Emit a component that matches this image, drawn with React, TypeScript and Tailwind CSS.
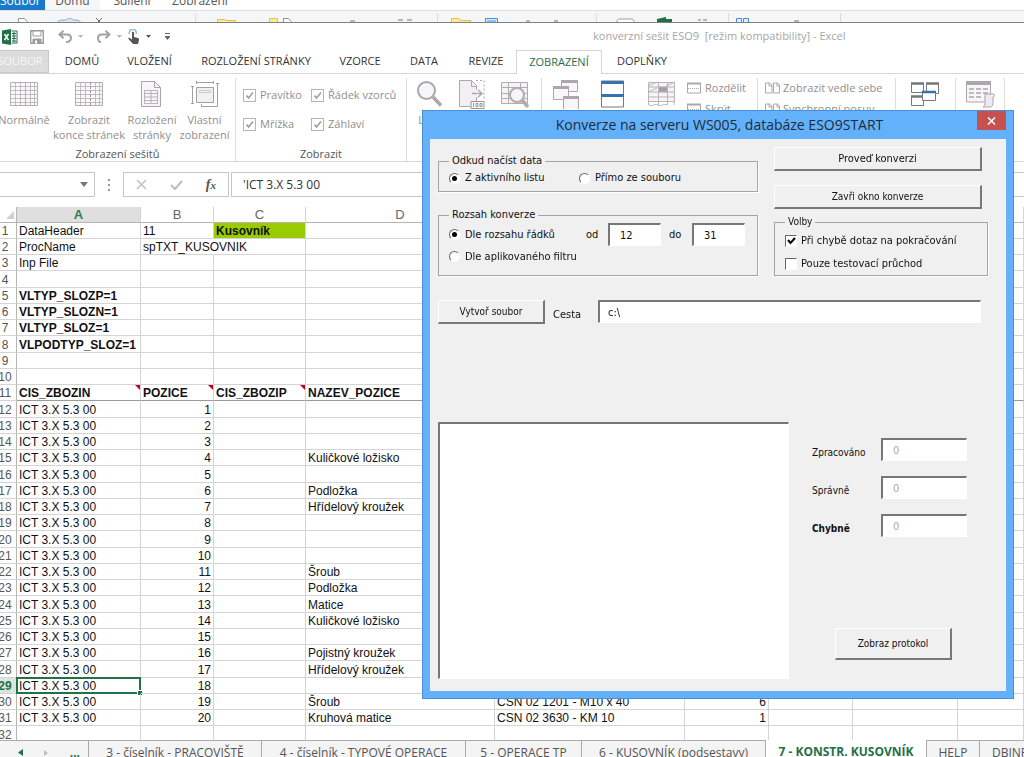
import { useState, type ReactNode } from 'react';

const UI = "font-['Open_Sans','Noto_Sans',sans-serif]";
const SANS = "font-['Liberation_Sans',Arial,sans-serif]";
const TAHOMA = "font-['DejaVu_Sans_Condensed','DejaVu_Sans',sans-serif]";

const tabs = [
  { label: 'DOMŮ', width: 'w-[66px]' },
  { label: 'VLOŽENÍ', width: 'w-[69px]' },
  { label: 'ROZLOŽENÍ STRÁNKY', width: 'w-[144px]' },
  { label: 'VZORCE', width: 'w-[64px]' },
  { label: 'DATA', width: 'w-[64px]' },
  { label: 'REVIZE', width: 'w-[60px]' },
  { label: 'ZOBRAZENÍ', width: 'w-[86px]' },
  { label: 'DOPLŇKY', width: 'w-[80px]' },
];

const names: Record<number, string> = {
  4: 'Kuličkové ložisko',
  6: 'Podložka',
  7: 'Hřídelový kroužek',
  11: 'Šroub',
  12: 'Podložka',
  13: 'Matice',
  14: 'Kuličkové ložisko',
  16: 'Pojistný kroužek',
  17: 'Hřídelový kroužek',
  19: 'Šroub',
  20: 'Kruhová matice',
};

const head: string[][] = [
  ['DataHeader', '11', 'Kusovník'],
  ['ProcName', 'spTXT_KUSOVNIK'],
  ['Inp File'],
  [],
  ['VLTYP_SLOZP=1'],
  ['VLTYP_SLOZN=1'],
  ['VLTYP_SLOZ=1'],
  ['VLPODTYP_SLOZ=1'],
  [],
  [],
  ['CIS_ZBOZIN', 'POZICE', 'CIS_ZBOZIP', 'NAZEV_POZICE'],
];

const items = Array.from({ length: 20 }, (_, i) => {
  const n = i + 1;
  const row = ['ICT 3.X 5.3 00', String(n), '', names[n] ?? '', '', ''];
  if (n === 19) {
    row[4] = 'CSN 02 1201 - M10 x 40';
    row[5] = '6';
  }
  if (n === 20) {
    row[4] = 'CSN 02 3630 - KM 10';
    row[5] = '1';
  }
  return row;
});

const rows: string[][] = [...head, ...items, []];

/* ---------- top strip of the window behind ---------- */

function BackWindow() {
  return (
    <div className={`${UI} text-[12px] leading-4 text-[#555]`}>
      <div className="flex h-[11px] items-end overflow-hidden border-b border-[#dfe0e1]">
        <button className="h-full w-[45px] shrink-0 bg-[#1979ca] text-white"><span className="-mt-2 block pr-2">Soubor</span></button>
        <button className="h-full w-[55px] shrink-0 bg-[#f5f6f7]"><span className="-mt-2 block">Domů</span></button>
        <button className="h-full w-[64px] shrink-0"><span className="-mt-2 block">Sdílení</span></button>
        <button className="h-full w-[72px] shrink-0"><span className="-mt-2 block">Zobrazení</span></button>
      </div>
      <div className="h-3 overflow-hidden border-b border-[#808080] bg-[#f5f6f7]">
        <svg width="1024" height="11" fill="none">
          <path d="M195.500 2v9M437.500 2v9M596.500 2v9M728.500 2v9M840.500 2v9" stroke="#dcdddd" />
          <path d="M18.500 11V7.500h6l3 3.500M283.500 11V7.500h5l3 3.500" stroke="#8f9499" fill="#fff" />
          <path d="M58 11c0-2 4-2 8-2 1-2 6-2 7 0 4 0 7 0 7 2" stroke="#8fa8cf" fill="#dce6f4" />
          <path d="M96 7l4 4M102 7l-4 4" stroke="#6c6c6c" />
          <path d="M217.500 11V8.500h7l2 1h9V11M269.500 11V7.500h8V11M451.500 11V7.500h7l3 2h9V11" fill="#fbe9a0" stroke="#e3c14a" />
          <path d="M350 10h5M398 9h5M407 9h5M526 10h4M554 10h4M698 9h3M703 9h4M794 10h5" stroke="#777" />
          <path d="M485.500 11V7.500h12V11M487 10h9M736.500 11V7.500h5V11M743.500 11V7.500h5V11" stroke="#3b8ede" fill="#e2f0fd" />
          <path d="M617 11c0-3 2-3 4-3h10c2 0 3 1 3 3" stroke="#999" fill="#fff" />
          <path d="M657 11V8l9-2v2h6v3z" fill="#1e7145" />
        </svg>
      </div>
    </div>
  );
}

/* ---------- quick access bar ---------- */

function Caret({ dark }: { dark?: boolean }) {
  return (
    <svg width="5" height="3" className={dark ? 'text-[#555]' : 'text-[#b5b5b5]'}>
      <path d="M0 0h5L2.500 3z" fill="currentColor" />
    </svg>
  );
}

function QuickAccess() {
  return (
    <div className={`${UI} flex h-[27px] shrink-0 items-center text-[11px]`}>
      <div className="flex w-[593px] shrink-0 items-center pl-[2px]">
        <svg width="16" height="16" viewBox="0 0 16 16">
          <path d="M0 1.500 9 0v16L0 14.500z" fill="#1e7145" />
          <path d="M9.500 2h5.500v12H9.500" fill="#fff" stroke="#1e7145" />
          <path d="M10 4.500h4M10 7h4M10 9.500h4M10 12h4M12 3v10" stroke="#1e7145" />
          <path d="M2.500 5l4 6M6.500 5l-4 6" stroke="#fff" strokeWidth="1.500" />
        </svg>
        <button aria-label="Uložit" className="ml-3">
          <svg width="14" height="14" viewBox="0 0 14 14" fill="none" stroke="#9c9c9c">
            <path d="M.7.700h12.600v12.600H.7z" strokeWidth="1.400" />
            <path d="M3 1v5h8V1" />
            <path d="M3 13V9h8v4" fill="#9c9c9c" />
            <path d="M5 10.500h2v3H5z" fill="#fff" stroke="none" />
          </svg>
        </button>
        <button aria-label="Zpět" className="ml-[14px] flex items-center gap-[6px]">
          <svg width="14" height="13" viewBox="0 0 14 13" fill="none" stroke="#a3a3a3" strokeWidth="2">
            <path d="M5.500.800 1.500 4.500l4 3.700M2 4.500h7c2.500 0 4 1.500 4 3.500 0 2.500-2 4-5 4" />
          </svg>
          <Caret />
        </button>
        <button aria-label="Znovu" className="ml-[14px] flex items-center gap-[6px]">
          <svg width="14" height="13" viewBox="0 0 14 13" fill="none" stroke="#a3a3a3" strokeWidth="2">
            <path d="M8.500.800l4 3.700-4 3.700M12 4.500H5C2.500 4.500 1 6 1 8c0 2.500 1 4 3 4" />
          </svg>
          <Caret />
        </button>
        <button aria-label="Dotykový režim" className="ml-[6px] flex items-center gap-[6px]">
          <svg width="12" height="15" viewBox="0 0 12 15">
            <path d="M1.500 5a3.500 3.500 0 1 1 6.500 0" fill="none" stroke="#8db8e0" strokeWidth="1.500" />
            <path d="M4 3.500c0-1 2-1 2 0V8l4 1c1 .300 1 1 1 2l-1 4H5L.500 10c-.5-1 .5-1.500 1.200-1L4 10.500z" fill="#555" />
          </svg>
          <Caret dark />
        </button>
        <button aria-label="Přizpůsobit" className="ml-[13px]">
          <svg width="7" height="8"><path d="M1 .500h5" stroke="#666" /><path d="M1 3h5v1L3.500 7 1 4z" fill="#666" /></svg>
        </button>
      </div>
      <h1 className="whitespace-pre text-[#a6a6a6]">konverzní sešit ESO9  [režim kompatibility] - Excel</h1>
    </div>
  );
}

/* ---------- ribbon ---------- */

function RibbonTabs() {
  return (
    <nav className={`${UI} flex h-6 shrink-0 border-b border-[#d5d5d5] text-[11px] text-[#333]`}>
      <button className="flex w-[49px] shrink-0 items-center justify-center border border-l-0 border-[#c6c6c6] bg-[#dcdcdc] pr-2 text-[#f7f7f7]">SOUBOR</button>
      {tabs.map((t) =>
        t.label === 'ZOBRAZENÍ' ? (
          <button key={t.label} className={`${t.width} -mb-px h-6 shrink-0 border border-b-0 border-[#d5d5d5] bg-white text-[#1e7145]`}>{t.label}</button>
        ) : (
          <button key={t.label} className={`${t.width} shrink-0 whitespace-nowrap`}>{t.label}</button>
        )
      )}
    </nav>
  );
}

function BigButton({ width, icon, label, lines = [] }: { width: string; icon: ReactNode; label?: string; lines?: string[] }) {
  return (
    <button aria-label={label} className={`${width} flex shrink-0 flex-col items-center`}>
      <span className="mb-[2px] flex h-8 items-center">{icon}</span>
      {lines.map((l) => (
        <span key={l} className="whitespace-nowrap leading-[15px]">{l}</span>
      ))}
    </button>
  );
}

function Group({ width, title, children }: { width: string; title?: string; children: ReactNode }) {
  return (
    <div className={`${width} flex h-[84px] shrink-0 flex-col justify-between border-r border-[#dcdcdc]`}>
      <div className="flex">{children}</div>
      {title && <div className="text-center leading-4 text-[#555]">{title}</div>}
    </div>
  );
}

function RibbonCheck({ label }: { label: string }) {
  return (
    <label className="flex items-center gap-1 whitespace-nowrap">
      <span className="relative flex">
        <input type="checkbox" defaultChecked className="size-[13px] appearance-none border border-[#b5b5b5] bg-white" />
        <svg className="pointer-events-none absolute left-0 top-0" width="13" height="13" fill="none" stroke="#9a9a9a" strokeWidth="1.500">
          <path d="M3.500 6.500 5.500 9 10 3.500" />
        </svg>
      </span>
      {label}
    </label>
  );
}

const GridIcon = ({ split }: { split?: boolean }) => (
  <svg width="29" height="26" fill="none" stroke="#b4afb3">
    <path d="M.500 1.500h27v23H.500z" fill="#faf8fa" />
    <path d="M1 5.500h27M1 9.500h27M1 13.500h27M1 17.500h27M1 21.500h27M5.500 1v23M10.500 1v23M20.500 1v23M24.500 1v23" strokeWidth=".8" />
    <path d="M15.500 1v23" strokeDasharray={split ? '3 1' : undefined} stroke={split ? '#9a969a' : '#b4afb3'} />
  </svg>
);

const PageIcon = () => (
  <svg width="22" height="28" fill="none" stroke="#a8a4a8">
    <path d="M.500 1.500h13l6 6v19H.500z" fill="#f7f5f7" />
    <path d="M13.500 1v6.500h6" />
    <path d="M3.500 10.500h13v13h-13zM3.500 13.500h13M3.500 17h13M3.500 20.500h13M10 10.500v13" strokeWidth=".8" />
  </svg>
);

const CustomViewIcon = () => (
  <svg width="28" height="27" fill="none" stroke="#a39fa3">
    <path d="M5.500 6.500h17v15h-17z" fill="#f3f0f4" />
    <path d="M8.500 9.500h11v2h-11z" stroke="#ccc" />
    <path d="M5 1.500h17M5.500 0v3M22.500 0v3M1.500 5v17M0 5.500h3M0 22.500h3M26.500 3v22.500H10M25 2.500h3M10.500 23v3" />
  </svg>
);

const LensIcon = () => (
  <svg width="30" height="28" fill="none" stroke="#aba7ab">
    <circle cx="10.500" cy="10.500" r="8.500" fill="#f6f6f8" strokeWidth="2" />
    <path d="M17 17l8 8.500" strokeWidth="3.500" />
  </svg>
);

const HundredIcon = () => (
  <svg width="26" height="30" fill="none" stroke="#aba7ab">
    <path d="M.500 1.500h12l5 5V22H12v5H.500z" fill="#f3eff5" stroke="none" />
    <path d="M12 27.500H.500v-26h12l5 5V11M17.500 18v4" />
    <path d="M12.500 1.500v6h5" />
    <path d="M17 1.500h8V20" strokeDasharray="2 2" />
    <path d="M13 14.500h9M19 11l4 3.500-4 3.500" strokeWidth="1.500" />
    <path d="M12 22.500h13v7H12z" fill="#fff" stroke="#959195" />
    <path d="M14.500 24v4M17 24.500h2v3h-2zM21 24.500h2v3h-2z" stroke="#959195" />
  </svg>
);

const ZoomSelIcon = () => (
  <svg width="29" height="28" fill="none" stroke="#b0acb0">
    <path d="M.500 2.500h26v21H.500zM1 7.500h26M1 13.500h26M1 18.500h26M7.500 2v21M19.500 2v21" fill="#f5f3f6" />
    <circle cx="16" cy="15" r="7" fill="#f6f6f8" strokeWidth="2" />
    <path d="M21 20l6 7" strokeWidth="3.500" />
  </svg>
);

const NewWindowIcon = () => (
  <svg width="26" height="30" fill="none" stroke="#aba7ab">
    <path d="M8.500 2.500h16v10h-16z" fill="#f8f6f8" />
    <path d="M8 2.500h17" strokeWidth="3" />
    <path d="M.500 8.500h15v12H.500z" fill="#f8f6f8" />
    <path d="M0 8.500h16" strokeWidth="3" />
    <path d="M10.500 18.500h15v12h-15z" fill="#f8f6f8" />
    <path d="M10 18.500h16" strokeWidth="3" />
  </svg>
);

const ArrangeIcon = () => (
  <svg width="24" height="28" fill="none">
    <path d="M.500 1h22v26H.500z" fill="#fff" stroke="#777" />
    <path d="M0 2.500h23M0 15.500h23" stroke="#3572b0" strokeWidth="3" />
  </svg>
);

const FreezeIcon = () => (
  <svg width="28" height="26" fill="none" stroke="#b8b4b8">
    <path d="M.500 1.500h26v19h-26zM.500 6h26M.500 11h26M.500 16h26M10.500 1v23M19.500 1v23M1 24c3 2 6-2 9 0 3 2 6-2 9 0M.500 20v4M26 20v4" fill="#f6f4f6" />
    <path d="M0 5l9-4M0 11l9-4M18 5l9-4" />
    <path d="M10.500 6h9v5h-9z" fill="#a39fa3" />
  </svg>
);

const SplitIcon = () => (
  <svg width="14" height="12" fill="none" stroke="#aba7ab">
    <path d="M.500 1.500h13v9.500H.500z" /><path d="M0 1.500h14" strokeWidth="2" /><path d="M1 6.500h12" strokeDasharray="1 1" />
  </svg>
);

const SideIcon = () => (
  <svg width="15" height="12" fill="none" stroke="#aba7ab">
    <path d="M.500 1h4l2.500 2v8H.500zM8.500 1h4L14.500 3v8h-6zM4 1v3h3M12 1v3h2.500" />
  </svg>
);

const SwitchIcon = () => (
  <svg width="29" height="26" fill="none" stroke="#777">
    <path d="M.500 2.500h12v9H.500zM15.500 2.500h12v10h-12zM.500 15.500h12v9H.500z" fill="#fff" />
    <path d="M0 2.500h13M15 2.500h13M0 15.500h13" strokeWidth="2.500" />
    <path d="M11.500 10.500h13v9h-13z" fill="#fff" /><path d="M11 11h14" stroke="#3572b0" strokeWidth="2.500" />
  </svg>
);

const MacroIcon = () => (
  <svg width="29" height="28" fill="none" stroke="#aba7ab">
    <path d="M.500 2h24v20H.500z" fill="#f8f6f8" /><path d="M0 3h25" strokeWidth="4" />
    <path d="M3 9h5M10 9h5M17 9h5M3 13h5M10 13h5M17 13h5M3 17h5M10 17h5" strokeWidth="1.500" />
    <path d="M19 14h8c2 0 2 3 0 3v7c0 2-2 3-3 3h-7c2-1 2-3 2-5z" fill="#eee9f0" />
  </svg>
);

function Ribbon() {
  return (
    <section className={`${UI} flex h-[88px] shrink-0 items-start overflow-hidden border-b border-[#d5d5d5] pt-1 text-[11px] text-[#8f8f8f]`}>
      <Group width="w-[236px]" title="Zobrazení sešitů">
        <BigButton width="w-[48px]" icon={<GridIcon />} lines={['Normálně']} />
        <BigButton width="w-[82px]" icon={<GridIcon split />} lines={['Zobrazit', 'konce stránek']} />
        <BigButton width="w-[44px]" icon={<PageIcon />} lines={['Rozložení', 'stránky']} />
        <BigButton width="w-[61px]" icon={<CustomViewIcon />} lines={['Vlastní', 'zobrazení']} />
      </Group>
      <Group width="w-[171px]" title="Zobrazit">
        <div className="grid grid-cols-[68px_1fr] gap-y-[11px] pl-[7px] pt-2 leading-[18px]">
          <RibbonCheck label="Pravítko" />
          <RibbonCheck label="Řádek vzorců" />
          <RibbonCheck label="Mřížka" />
          <RibbonCheck label="Záhlaví" />
        </div>
      </Group>
      <Group width="w-[135px]">
        <BigButton width="w-[48px]" icon={<LensIcon />} lines={['Lupa']} />
        <BigButton width="w-[34px]" icon={<HundredIcon />} label="100 %" />
        <BigButton width="w-[53px]" icon={<ZoomSelIcon />} label="Přejít na výběr" />
      </Group>
      <Group width="w-[216px]">
        <BigButton width="w-[48px]" icon={<NewWindowIcon />} label="Nové okno" />
        <BigButton width="w-[46px]" icon={<ArrangeIcon />} label="Uspořádat vše" />
        <BigButton width="w-[51px]" icon={<FreezeIcon />} label="Ukotvit příčky" />
        <div className="flex flex-col gap-[5px] pt-[2px] leading-4">
          <button className="flex items-center gap-1"><SplitIcon />Rozdělit</button>
          <button className="flex items-center gap-1"><SplitIcon />Skrýt</button>
        </div>
      </Group>
      <Group width="w-[138px]">
        <div className="flex flex-col gap-[5px] whitespace-nowrap pl-[7px] pt-[2px] leading-4">
          <button className="flex items-center gap-[3px]"><SideIcon />Zobrazit vedle sebe</button>
          <button className="flex items-center gap-[3px]"><SideIcon />Synchronní posuv</button>
        </div>
      </Group>
      <Group width="w-[60px]">
        <BigButton width="w-[59px]" icon={<SwitchIcon />} label="Přepnout okna" />
      </Group>
      <Group width="w-[49px]">
        <BigButton width="w-[48px]" icon={<MacroIcon />} label="Makra" />
      </Group>
    </section>
  );
}

function FormulaBar() {
  return (
    <div className="flex h-[45px] shrink-0 items-start pt-[10px]">
      <div className="flex h-[25px] w-[95px] shrink-0 items-center justify-end border border-l-0 border-[#c6c6c6] pr-[6px]">
        <svg width="8" height="5"><path d="M0 0h8L4 5z" fill="#777" /></svg>
      </div>
      <svg className="mx-3 mt-[7px] shrink-0" width="4" height="12" fill="#999"><path d="M1 0h2v2H1zM1 5h2v2H1zM1 10h2v2H1z" /></svg>
      <div className="flex h-[25px] w-[106px] shrink-0 items-center justify-between border border-[#c6c6c6] pl-3 pr-3">
        <button aria-label="Storno"><svg width="11" height="11" stroke="#c0c0c0" strokeWidth="1.500"><path d="M1 1l9 9M10 1l-9 9" /></svg></button>
        <button aria-label="Zadat"><svg width="13" height="10" fill="none" stroke="#bdbdbd" strokeWidth="2"><path d="M1 5l4 4 7-8" /></svg></button>
        <button aria-label="Vložit funkci" className="font-['Liberation_Serif',serif] text-[14px] font-bold italic leading-4 text-[#555]">f<span className="text-[11px]">x</span></button>
      </div>
      <input
        aria-label="Řádek vzorců"
        defaultValue="'ICT 3.X 5.3 00"
        className={`${UI} ml-[2px] h-[25px] min-w-0 flex-1 border border-r-0 border-[#c6c6c6] bg-white pl-[11px] text-[12px] text-[#333] outline-none`}
      />
    </div>
  );
}

/* ---------- sheet ---------- */

function Cell({ r, c, text }: { r: number; c: number; text: string }) {
  const bold = (r >= 5 && r <= 11) || (r === 1 && c === 2);
  const right = r > 11 && (c === 1 || c === 5);
  const selected = r === 29 && c === 0;
  const note = r === 11 && c < 3;
  return (
    <td
      className={`relative whitespace-nowrap border-b border-r pb-0 pt-[2px] ${r === 11 ? 'border-b-[#9b9b9b]' : 'border-b-[#d4d4d4]'} ${r === 2 && c === 1 ? 'border-r-transparent' : 'border-r-[#d4d4d4]'} ${r === 1 && c === 2 ? 'bg-[#99cc00]' : ''} ${bold ? 'font-bold' : ''} ${right ? 'pl-0 pr-[2px] text-right' : 'pl-[2px] pr-0'}`}
    >
      {text}
      {note && <span className="absolute right-0 top-0 border-l-[5px] border-t-[5px] border-l-transparent border-t-[#c00020]" />}
      {selected && (
        <span className="absolute -inset-px border-2 border-[#217346]">
          <span className="absolute -bottom-[3px] -right-[3px] size-[5px] border-l border-t border-white bg-[#217346]" />
        </span>
      )}
    </td>
  );
}

function Sheet() {
  return (
    <div className="min-h-0 flex-1 overflow-hidden">
      <table className={`${SANS} w-full table-fixed border-separate border-spacing-0 text-[12px] leading-[13px] text-[#111]`}>
        <colgroup>
          <col className="w-[17px]" />
          <col className="w-[124px]" />
          <col className="w-[73px]" />
          <col className="w-[92px]" />
          <col className="w-[189px]" />
          <col className="w-[190px]" />
          <col className="w-[84px]" />
          <col className="w-[84px]" />
          <col className="w-[105px]" />
          <col />
        </colgroup>
        <thead>
          <tr className="h-4 text-[13px] leading-[15px] text-[#666]">
            <th className="border-b border-r border-[#b5b5b5] p-0">
              <svg className="ml-[6px]" width="8" height="8"><path d="M8 0v8H0z" fill="#d0d0d0" /></svg>
            </th>
            {['A', 'B', 'C', 'D', 'E', 'F', 'G', 'H', 'I'].map((h) => (
              <th key={h} className={`border-b border-r border-b-[#b5b5b5] border-r-[#d4d4d4] p-0 ${h === 'A' ? 'bg-[#dfdfdf] font-bold text-[#2f7d55]' : 'font-normal'}`}>{h}</th>
            ))}
          </tr>
        </thead>
        <tbody>
          {rows.map((row, i) => {
            const r = i + 1;
            return (
              <tr key={r} className={r % 4 === 0 ? 'h-[17px]' : 'h-4'}>
                <th className={`border-b border-r border-b-[#d4d4d4] border-r-[#b5b5b5] px-0 pb-0 pt-[2px] ${r === 29 ? 'bg-[#dbe4df] font-bold text-[#217346]' : 'font-normal text-[#555]'}`}>
                  <span className="flex w-[10px] justify-center">{r}</span>
                </th>
                {Array.from({ length: 9 }, (_, c) => (
                  <Cell key={c} r={r} c={c} text={row[c] ?? ''} />
                ))}
              </tr>
            );
          })}
        </tbody>
      </table>
    </div>
  );
}

function SheetTabs() {
  const tab = 'h-full shrink-0 border-t border-t-[#ababab] whitespace-nowrap';
  const mark = 'border-r border-r-[#ababab]';
  return (
    <div className={`${UI} h-[17px] shrink-0 overflow-hidden bg-[#f4f4f4] text-[12px] text-[#555]`}>
      <div className="flex h-6">
        <div className={`${tab} ${mark} flex w-[89px] items-center justify-between pl-[18px] pr-2`}>
          <button aria-label="Předchozí"><svg width="5" height="7"><path d="M5 0v7L0 3.500z" fill="#217346" /></svg></button>
          <button aria-label="Další"><svg width="4" height="6"><path d="M0 0v6l4-3z" fill="#c0c0c0" /></svg></button>
          <button className="font-bold text-[#217346]">...</button>
        </div>
        <button className={`${tab} ${mark} w-[173px]`}>3 - číselník - PRACOVIŠTĚ</button>
        <button className={`${tab} ${mark} w-[204px]`}>4 - číselník - TYPOVÉ OPERACE</button>
        <button className={`${tab} ${mark} w-[116px]`}>5 - OPERACE TP</button>
        <button className={`${tab} ${mark} w-[184px]`}>6 - KUSOVNÍK (podsestavy)</button>
        <button className="h-full w-[160px] shrink-0 whitespace-nowrap bg-white font-bold text-[#1e7145]">7 - KONSTR. KUSOVNÍK</button>
        <button className={`${tab} ${mark} w-[54px] border-l border-l-[#ababab]`}>HELP</button>
        <button className={`${tab} flex-1 overflow-hidden pl-3 text-left`}>DBINFO</button>
      </div>
    </div>
  );
}

/* ---------- dialog ---------- */

const raised = 'border border-b-2 border-r-2 border-white border-b-[#777] border-r-[#777] bg-[#f0f0f0]';
const sunken = 'border border-l-2 border-t-2 border-white border-l-[#777] border-t-[#777] bg-white outline-none';
const frame = 'border border-[#a5a5a5] shadow-[1px_1px_0_#fff]';

function Radio({ name, label, checked }: { name: string; label: string; checked?: boolean }) {
  return (
    <label className="flex items-center gap-[5px] whitespace-nowrap">
      <input
        type="radio"
        name={name}
        defaultChecked={checked}
        className="grid size-[11px] appearance-none place-items-center rounded-full border border-white border-l-[#666] border-t-[#666] bg-white before:size-[5px] before:rounded-full checked:before:bg-black"
      />
      {label}
    </label>
  );
}

function Check({ label, checked }: { label: string; checked?: boolean }) {
  return (
    <label className="flex items-center gap-1 whitespace-nowrap">
      <span className="relative flex">
        <input type="checkbox" defaultChecked={checked} className="peer size-3 appearance-none border border-white border-l-[#666] border-t-[#666] bg-white" />
        <svg className="pointer-events-none absolute left-0 top-0 hidden peer-checked:block" width="12" height="12" fill="none" stroke="#000" strokeWidth="2">
          <path d="M3 5l2.500 3L10 3" />
        </svg>
      </span>
      {label}
    </label>
  );
}

function Counter({ id, label, bold }: { id: string; label: string; bold?: boolean }) {
  return (
    <div className="flex h-[23px] items-center">
      <label htmlFor={id} className={`w-[69px] pt-[6px] text-[10px] ${bold ? 'font-bold' : ''}`}>{label}</label>
      <input id={id} disabled value="0" readOnly className={`${sunken} h-[23px] w-[86px] pl-[10px] text-[#aaa]`} />
    </div>
  );
}

function ConversionDialog() {
  const [from, setFrom] = useState('12');
  const [to, setTo] = useState('31');
  const [path, setPath] = useState('c:\\');

  return (
    <div role="dialog" aria-labelledby="dlg-title" className="absolute left-[422px] top-[110px] flex w-[592px] flex-col border border-[#4a90d0] bg-[#64b1fb] px-[7px] pb-[7px]">
      <div className="flex h-[28px] items-start">
        <h2 id="dlg-title" className={`${UI} flex-1 pl-8 text-center text-[14px] leading-[28px] text-[#1c2b3a]`}>
          Konverze na serveru WS005, databáze ESO9START
        </h2>
        <button aria-label="Zavřít" className="grid h-[19px] w-[29px] place-items-center bg-[#c75050]">
          <svg width="9" height="8" stroke="#fff" strokeWidth="1.500"><path d="M1 .500l7 7M8 .500l-7 7" /></svg>
        </button>
      </div>

      <form className={`${TAHOMA} bg-[#f0f0f0] pb-3 pl-2 pr-[18px] text-[11px] leading-[14px] text-[#111]`} onSubmit={(e) => e.preventDefault()}>
        <div className="flex gap-4 pt-2">
          <div className="flex w-[320px] shrink-0 flex-col gap-4 pt-[7px]">
            <fieldset className={`${frame} h-[38px] pl-[10px]`}>
              <legend className="px-[3px]">Odkud načíst data</legend>
              <div className="grid h-[20px] grid-cols-[130px_1fr]">
                <Radio name="source" label="Z aktivního listu" checked />
                <Radio name="source" label="Přímo ze souboru" />
              </div>
            </fieldset>
            <fieldset className={`${frame} h-[68px] pl-[10px]`}>
              <legend className="px-[3px]">Rozsah konverze</legend>
              <div className="flex h-[25px] items-center">
                <div className="w-[137px]"><Radio name="range" label="Dle rozsahu řádků" checked /></div>
                <label htmlFor="from" className="w-[22px]">od</label>
                <input id="from" autoFocus value={from} onChange={(e) => setFrom(e.target.value)} className={`${sunken} h-[23px] w-[53px] pl-[10px]`} />
                <label htmlFor="to" className="w-[31px] pl-2">do</label>
                <input id="to" value={to} onChange={(e) => setTo(e.target.value)} className={`${sunken} h-[23px] w-[53px] pl-[10px]`} />
              </div>
              <div className="flex h-[19px] items-center"><Radio name="range" label="Dle aplikovaného filtru" /></div>
            </fieldset>
          </div>
          <div className="flex flex-1 flex-col items-start">
            <button className={`${raised} h-[24px] w-[208px]`}>Proveď konverzi</button>
            <button className={`${raised} mt-[14px] h-[24px] w-[208px] text-[10px]`}>Zavři okno konverze</button>
            <fieldset className={`${frame} mt-[6px] h-[61px] w-full pl-[10px]`}>
              <legend className="px-[3px] text-[10px]">Volby</legend>
              <div className="flex flex-col gap-[9px] pt-[5px]">
                <Check label="Při chybě dotaz na pokračování" checked />
                <Check label="Pouze testovací průchod" />
              </div>
            </fieldset>
          </div>
        </div>

        <div className="mt-6 flex h-6 pr-[7px]">
          <button className={`${raised} h-[24px] w-[107px] shrink-0 text-[10px]`}>Vytvoř soubor</button>
          <label htmlFor="path" className="w-[53px] shrink-0 pl-2 pt-2">Cesta</label>
          <input id="path" value={path} onChange={(e) => setPath(e.target.value)} className={`${sunken} h-[23px] min-w-0 flex-1 pl-2`} />
        </div>

        <div className="mt-[98px] flex">
          <div role="listbox" aria-label="Protokol" className={`${sunken} h-[257px] w-[351px] shrink-0`} />
          <div className="flex flex-1 flex-col gap-[15px] pl-[23px] pt-[16px]">
            <Counter id="done" label="Zpracováno" />
            <Counter id="ok" label="Správně" />
            <Counter id="bad" label="Chybně" bold />
            <button className={`${raised} ml-[23px] mt-[76px] h-[32px] w-[117px] text-[10px]`}>Zobraz protokol</button>
          </div>
        </div>
      </form>
    </div>
  );
}

export default function App() {
  return (
    <main className="relative flex h-screen flex-col overflow-hidden bg-white">
      <BackWindow />
      <QuickAccess />
      <RibbonTabs />
      <Ribbon />
      <FormulaBar />
      <Sheet />
      <SheetTabs />
      <ConversionDialog />
    </main>
  );
}
